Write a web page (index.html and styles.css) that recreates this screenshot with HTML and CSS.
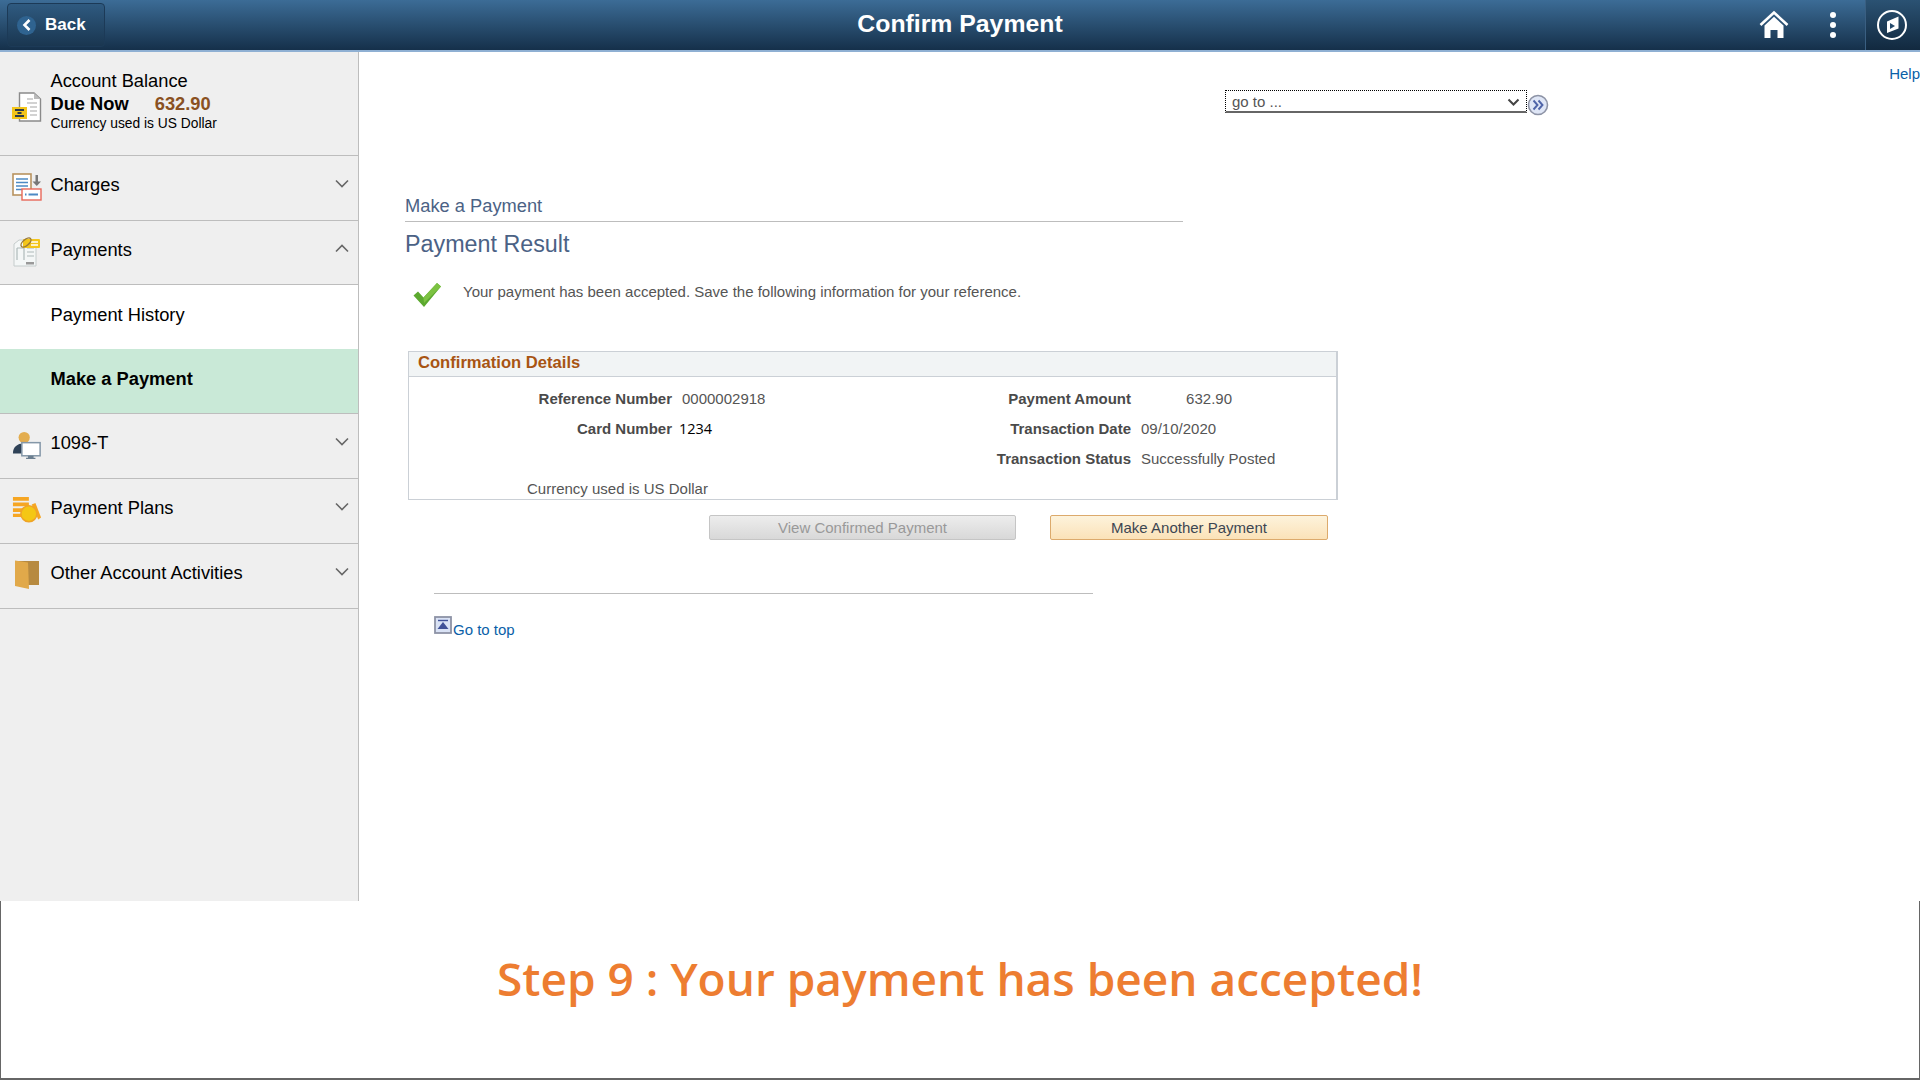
FILE: index.html
```html
<!DOCTYPE html>
<html lang="en">
<head>
    <meta charset="UTF-8">
    <title>Confirm Payment</title>
    <link rel="stylesheet" href="styles.css">
</head>
<body>
    <div class="app">
        <header class="topbar">
            <a class="back-btn" href="#">
                <span class="back-circle">
                    <svg width="12" height="14" viewBox="0 0 12 14"><path d="M8.5 2 L3.5 7 L8.5 12" fill="none" stroke="#fff" stroke-width="2.6"/></svg>
                </span>
                Back
            </a>
            <h1 class="page-title">Confirm Payment</h1>
            <div class="topbar-icons">
                <svg class="home-icon" width="30" height="30" viewBox="0 0 30 30">
                    <path d="M1.5 15 L15 2.5 L28.5 15" fill="none" stroke="#fff" stroke-width="2.6"/>
                    <path d="M5.5 15.5 L15 6.8 L24.5 15.5 V28 H18.5 V20 H11.5 V28 H5.5 Z" fill="#fff"/>
                </svg>
                <div class="dots"><span></span><span></span><span></span></div>
                <div class="nav-compass">
                    <svg width="32" height="32" viewBox="0 0 32 32">
                        <circle cx="16" cy="16" r="14" fill="none" stroke="#fff" stroke-width="2"/>
                        <path d="M11 12.5 L22.5 7.5 V19.5 L11 24 Z" fill="#fff"/>
                        <path d="M14 14 L19 17 L14 20 Z" fill="#24496b"/>
                    </svg>
                </div>
            </div>
        </header>

        <div class="layout">
            <aside class="sidebar">
                <div class="balance">
                    <svg class="side-icon" width="30" height="32" viewBox="0 0 30 32">
                        <path d="M7.5 3 H22 L28.5 9 V31 H7.5 Z" fill="#fff" stroke="#8a8a8a" stroke-width="1.4"/>
                        <path d="M22 3 V9 H28.5 Z" fill="#bbb"/>
                        <path d="M15 9 H21 M15 13 H25 M18 17 H25 M18 21 H25 M18 25 H25" stroke="#c4c4c4" stroke-width="1.4"/>
                        <rect x="0" y="17" width="15" height="12" fill="#f3c51b"/>
                        <path d="M3 20 H12 M5.5 23 H9.5 M3 26 H12" stroke="#2b3a4b" stroke-width="1.8"/>
                    </svg>
                    <div class="balance-text">
                        <div class="balance-title">Account Balance</div>
                        <div class="balance-due"><b>Due Now</b><span class="due-amount">632.90</span></div>
                        <div class="balance-note">Currency used is US Dollar</div>
                    </div>
                </div>

                <a class="side-row" href="#">
                    <svg class="side-icon" width="30" height="30" viewBox="0 0 30 30">
                        <rect x="1" y="2" width="18" height="21" fill="#fff" stroke="#b8935f" stroke-width="1.6"/>
                        <path d="M4 7 H16 M4 10.5 H16 M4 14 H16 M4 17.5 H10" stroke="#4d8ac4" stroke-width="1.6"/>
                        <path d="M23.5 3 H26 V9.5 H29 L24.8 14 L20.5 9.5 H23.5 Z" fill="#777"/>
                        <rect x="10" y="17" width="19" height="11" fill="#fff" stroke="#e8685a" stroke-width="1.4"/>
                        <path d="M13 22.5 H14.5 M16.5 22.5 H26" stroke="#4d8ac4" stroke-width="1.8"/>
                    </svg>
                    <span>Charges</span>
                    <svg class="chev" width="14" height="9" viewBox="0 0 14 9"><path d="M1 1.5 L7 7.5 L13 1.5" fill="none" stroke="#666" stroke-width="1.6"/></svg>
                </a>

                <a class="side-row open" href="#">
                    <svg class="side-icon" width="30" height="32" viewBox="0 0 30 32">
                        <path d="M2 8 L7 4 H24 V30 H2 Z" fill="#f4f7f7" stroke="#c5cccc" stroke-width="1"/>
                        <path d="M5 12 H12 V24 M5 12 V24 M15 12 H22 M15 16 H22 M15 20 H22" fill="none" stroke="#aebaba" stroke-width="1.2"/>
                        <rect x="14" y="26" width="8" height="2.5" fill="#999"/>
                        <rect x="11" y="3" width="17" height="9" rx="1" fill="#f3c51b"/>
                        <path d="M19 6 H26 M19 9 H26" stroke="#fff" stroke-width="1.3"/>
                        <ellipse cx="14" cy="6.5" rx="6" ry="3" transform="rotate(-40 14 6.5)" fill="none" stroke="#9a7a3a" stroke-width="1.4"/>
                    </svg>
                    <span>Payments</span>
                    <svg class="chev" width="14" height="9" viewBox="0 0 14 9"><path d="M1 7.5 L7 1.5 L13 7.5" fill="none" stroke="#666" stroke-width="1.6"/></svg>
                </a>

                <a class="side-sub" href="#">Payment History</a>
                <a class="side-sub selected" href="#">Make a Payment</a>

                <a class="side-row" href="#">
                    <svg class="side-icon" width="32" height="32" viewBox="0 0 32 32">
                        <circle cx="13" cy="8" r="6" fill="#e3ad4f"/>
                        <path d="M1 25 C1 18 6 14.5 12 14.5 H18 V25 Z" fill="#2f4257"/>
                        <rect x="10.5" y="13.5" width="19.5" height="14" fill="#fff" stroke="#8497a8" stroke-width="1.6"/>
                        <path d="M17 27.5 H23 V29.5 H25 V31 H15 V29.5 H17 Z" fill="#6c7f90"/>
                    </svg>
                    <span>1098-T</span>
                    <svg class="chev" width="14" height="9" viewBox="0 0 14 9"><path d="M1 1.5 L7 7.5 L13 1.5" fill="none" stroke="#666" stroke-width="1.6"/></svg>
                </a>

                <a class="side-row" href="#">
                    <svg class="side-icon" width="32" height="30" viewBox="0 0 32 30">
                        <path d="M1 1 H18 V5 H1 Z M1 7 H18 V11 H1 Z M1 13 H18 V17 H1 Z M1 19 H14 V22.5 H1 Z" fill="#f6a623"/>
                        <path d="M21 9 L25 7.5 L31 23 L28 25 Z" fill="#f6a623"/>
                        <circle cx="18" cy="19" r="8.5" fill="#f4c715" stroke="#efa427" stroke-width="1.6"/>
                    </svg>
                    <span>Payment Plans</span>
                    <svg class="chev" width="14" height="9" viewBox="0 0 14 9"><path d="M1 1.5 L7 7.5 L13 1.5" fill="none" stroke="#666" stroke-width="1.6"/></svg>
                </a>

                <a class="side-row" href="#">
                    <svg class="side-icon" width="30" height="32" viewBox="0 0 30 32">
                        <path d="M3 2 H27 V26 H16 Z" fill="#b78a40"/>
                        <path d="M3 1.5 L16 3.5 L17 30 L3 27 Z" fill="#e1a94a"/>
                    </svg>
                    <span>Other Account Activities</span>
                    <svg class="chev" width="14" height="9" viewBox="0 0 14 9"><path d="M1 1.5 L7 7.5 L13 1.5" fill="none" stroke="#666" stroke-width="1.6"/></svg>
                </a>
            </aside>

            <main class="content">
                <div class="toolbar">
                    <div class="goto">
                        <div class="goto-select">
                            <span>go to ...</span>
                            <svg width="13" height="8" viewBox="0 0 13 8"><path d="M1.5 1.5 L6.5 6.5 L11.5 1.5" fill="none" stroke="#444" stroke-width="2"/></svg>
                        </div>
                        <svg class="goto-btn" width="22" height="22" viewBox="0 0 22 22">
                            <circle cx="11" cy="11" r="9.5" fill="#dfe6f6" stroke="#8d93a6" stroke-width="1.6"/>
                            <path d="M6.5 6.5 L10.5 11 L6.5 15.5 M11.5 6.5 L15.5 11 L11.5 15.5" fill="none" stroke="#4f64a8" stroke-width="1.9"/>
                        </svg>
                    </div>
                    <a class="help-link" href="#">Help</a>
                </div>

                <h2 class="crumb-title">Make a Payment</h2>
                <h3 class="result-title">Payment Result</h3>

                <div class="message">
                    <svg width="30" height="26" viewBox="0 0 30 26">
                        <path d="M1.5 13.5 L6 9.5 L11.5 15.5 L25 1 L29 4.5 L12 25 Z" fill="#5ca92f"/>
                        <path d="M11.5 15.5 L25 1 L29 4.5 L12 21 Z" fill="#7cc242"/>
                    </svg>
                    <p>Your payment has been accepted. Save the following information for your reference.</p>
                </div>

                <section class="details">
                    <div class="details-head">Confirmation Details</div>
                    <div class="details-grid">
                        <div class="label">Reference Number</div>
                        <div class="value">0000002918</div>
                        <div class="label">Payment Amount</div>
                        <div class="value amount">632.90</div>

                        <div class="label">Card Number</div>
                        <div class="value card">1234</div>
                        <div class="label">Transaction Date</div>
                        <div class="value">09/10/2020</div>

                        <div></div>
                        <div></div>
                        <div class="label">Transaction Status</div>
                        <div class="value">Successfully Posted</div>
                    </div>
                    <div class="details-note">Currency used is US Dollar</div>
                </section>

                <div class="actions">
                    <button class="btn btn-disabled">View Confirmed Payment</button>
                    <button class="btn btn-primary">Make Another Payment</button>
                </div>

                <hr class="divider">

                <a class="top-link" href="#">
                    <svg width="18" height="18" viewBox="0 0 18 18">
                        <rect x="1" y="1" width="16" height="16" fill="#d9e2f5" stroke="#8d93a6" stroke-width="1.8"/>
                        <path d="M4 4.5 H14" stroke="#3f5198" stroke-width="1.4"/>
                        <path d="M9 6 L14.5 13 H3.5 Z" fill="#3f5198"/>
                    </svg>
                    <span>Go to top</span>
                </a>
            </main>
        </div>

        <footer class="step-banner">Step 9 : Your payment has been accepted!</footer>
    </div>
</body>
</html>
```

FILE: styles.css
```css
* {
    box-sizing: border-box;
}

body {
    margin: 0;
    font-family: "Liberation Sans", Arial, sans-serif;
    background: #fff;
    color: #000;
}

a {
    text-decoration: none;
    color: inherit;
}

.app {
    width: 1920px;
    height: 1080px;
    display: flex;
    flex-direction: column;
    overflow: hidden;
}

/* top bar */
.topbar {
    height: 52px;
    flex: none;
    display: flex;
    align-items: center;
    justify-content: space-between;
    position: relative;
    padding-left: 7px;
    background: linear-gradient(#3c6c96, #15304a);
    border-bottom: 2px solid #8fb0d3;
}

.back-btn {
    width: 98px;
    height: 44px;
    display: flex;
    align-items: center;
    gap: 9px;
    padding-left: 9px;
    color: #fff;
    font-size: 17px;
    font-weight: bold;
    border: 1px solid #1c3a57;
    border-radius: 4px;
    background: linear-gradient(#2f5a80, #1a3650);
}

.back-circle {
    width: 19px;
    height: 19px;
    border-radius: 50%;
    background: #2f6390;
    display: flex;
    align-items: center;
    justify-content: center;
}

.page-title {
    position: absolute;
    left: 0;
    right: 0;
    top: 9px;
    margin: 0;
    text-align: center;
    color: #fff;
    font-size: 24.8px;
    line-height: 29px;
    font-weight: bold;
}

.topbar-icons {
    height: 50px;
    display: flex;
    align-items: center;
}

.home-icon {
    margin-right: 41px;
}

.dots {
    display: flex;
    flex-direction: column;
    gap: 4px;
    margin-right: 29px;
}

.dots span {
    width: 6px;
    height: 6px;
    border-radius: 50%;
    background: #fff;
}

.nav-compass {
    width: 55px;
    height: 50px;
    display: flex;
    align-items: center;
    justify-content: center;
    padding-right: 2px;
    border-left: 1px solid #3a5f82;
    background: linear-gradient(#2b5273, #12293f);
}

/* left column */
.layout {
    flex: 1;
    display: flex;
    min-height: 0;
}

.sidebar {
    width: 359px;
    flex: none;
    background: #efefef;
    border-right: 1px solid #bdbdbd;
}

.balance {
    height: 104px;
    display: flex;
    align-items: center;
    gap: 8.5px;
    padding: 0 0 0 12px;
    border-bottom: 1px solid #bdbdbd;
}

.balance-text {
    padding-bottom: 5px;
}

.balance-title {
    font-size: 18.3px;
    line-height: 23px;
}

.balance-due {
    font-size: 18.3px;
    line-height: 23px;
}

.due-amount {
    margin-left: 26px;
    color: #8a5122;
    font-weight: bold;
}

.balance-note {
    font-size: 13.8px;
    line-height: 18px;
}

.side-row {
    height: 65px;
    display: flex;
    align-items: center;
    padding: 0 9px 7px 12px;
    gap: 8.5px;
    font-size: 18.3px;
    border-bottom: 1px solid #bdbdbd;
}

.side-row.open {
    height: 64px;
    padding-bottom: 6px;
}

.side-icon {
    flex: none;
    width: 30px;
    margin-top: 5px;
}

.chev {
    margin-left: auto;
    margin-bottom: 3px;
}

.side-sub {
    height: 64px;
    display: flex;
    align-items: center;
    padding: 0 0 5px 50.5px;
    font-size: 18.3px;
    background: #fff;
}

.side-sub.selected {
    height: 65px;
    padding-bottom: 4px;
    font-weight: bold;
    background: #c9e9d7;
    border-bottom: 1px solid #bdbdbd;
}

/* main content */
.content {
    flex: 1;
    padding-left: 46px;
    color: #555;
}

.toolbar {
    height: 139px;
    display: flex;
    justify-content: space-between;
    align-items: flex-start;
    margin-left: -46px;
}

.goto {
    margin: 38px 0 0 866px;
    display: flex;
    align-items: flex-start;
}

.goto-select {
    width: 302px;
    height: 23px;
    display: flex;
    align-items: center;
    justify-content: space-between;
    padding: 1px 6px 0 6px;
    font-size: 15px;
    color: #555;
    border: 1px dotted #000;
    border-bottom: 2px solid #666;
}

.goto-btn {
    margin-top: 4px;
}

.help-link {
    margin-top: 13px;
    font-size: 15px;
    color: #0a5fa8;
}

.crumb-title {
    width: 778px;
    height: 31px;
    margin: 0;
    padding-top: 3px;
    font-size: 18.3px;
    line-height: 24px;
    font-weight: normal;
    color: #4b6285;
    border-bottom: 1px solid #bdbdbd;
}

.result-title {
    margin: 8px 0 0;
    font-size: 23.3px;
    line-height: 28px;
    font-weight: normal;
    color: #4b6285;
}

.message {
    height: 42px;
    display: flex;
    align-items: flex-start;
    gap: 21px;
    margin: 24px 0 0 7px;
}

.message p {
    margin: 0;
    font-size: 15px;
    line-height: 20px;
}

.details {
    width: 930px;
    height: 149px;
    margin: 27px 0 0 3px;
    border: 1px solid #cbd0d6;
    border-right-width: 2px;
}

.details-head {
    height: 25px;
    padding-left: 9px;
    font-size: 16.6px;
    line-height: 22px;
    font-weight: bold;
    color: #a85413;
    background: #f1f4f5;
    border-bottom: 1px solid #cbd0d6;
}

.details-grid {
    display: grid;
    grid-template-columns: 263px 200px 239px 1fr;
    column-gap: 10px;
    grid-auto-rows: 30px;
    margin-top: 7px;
    font-size: 15px;
    line-height: 30px;
}

.label {
    text-align: right;
    font-weight: bold;
    color: #4a4a4a;
}

.value.amount {
    width: 91px;
    text-align: right;
}

.value.card {
    margin-left: -3px;
    color: #000;
    font-family: "Open Sans", sans-serif;
    font-size: 14.5px;
}

.details-note {
    padding-left: 118px;
    font-size: 15px;
    line-height: 29px;
}

.actions {
    display: flex;
    margin: 15px 0 0 304px;
    gap: 34px;
}

.btn {
    height: 25px;
    padding: 0;
    font-family: inherit;
    font-size: 15px;
    border-radius: 2px;
}

.btn-disabled {
    width: 307px;
    color: #999;
    border: 1px solid #c5c5c5;
    background: linear-gradient(#ededed, #d8d8d8);
}

.btn-primary {
    width: 278px;
    color: #3c4652;
    border: 1px solid #dcaa6c;
    background: linear-gradient(#fdf3dc, #fbe2b8);
}

.divider {
    width: 659px;
    margin: 53px 0 0 29px;
    border: none;
    border-top: 1px solid #bdbdbd;
}

.top-link {
    display: flex;
    align-items: flex-start;
    gap: 1px;
    margin: 22px 0 0 29px;
    font-size: 15px;
    color: #0a5fa8;
}

.top-link span {
    padding-top: 5px;
}

/* caption under the screenshot */
.step-banner {
    height: 179px;
    flex: none;
    display: flex;
    align-items: center;
    justify-content: center;
    padding-bottom: 24px;
    font-family: "Open Sans", sans-serif;
    font-size: 46px;
    font-weight: 600;
    color: #ed7d31;
    background: #fff;
    border: 1px solid #666;
    border-top: none;
    border-bottom-width: 2px;
}
```
